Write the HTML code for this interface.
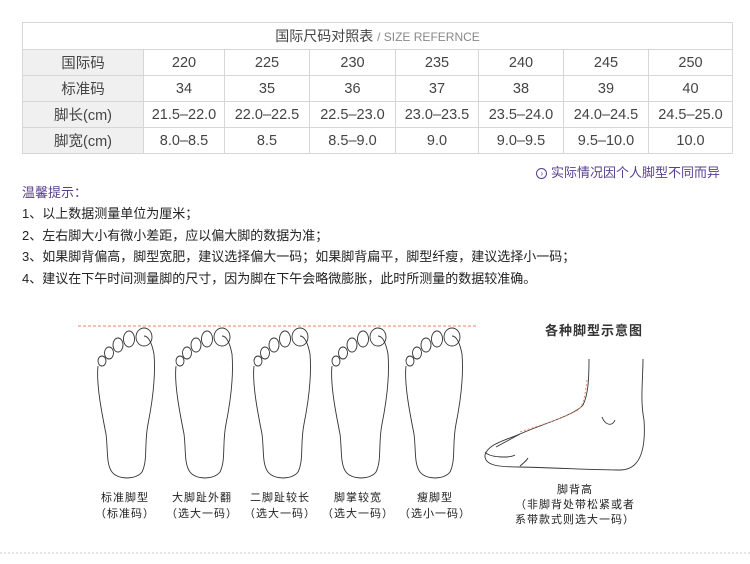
<!DOCTYPE html>
<html><head><meta charset="utf-8"><style>
body{margin:0;width:750px;height:564px;background:#fff;font-family:"Liberation Sans","Noto Sans CJK SC",sans-serif;color:#333;position:relative;overflow:hidden}
table{position:absolute;left:22px;top:22px;width:711px;border-collapse:collapse;font-size:14.5px;color:#444}
td{border:1px solid #d6d6d6;text-align:center;height:25px;padding:0}
td.h{background:#f0f0f0;width:120px}
.t{height:26px;font-size:14px}
.t span{font-size:12px;color:#888}
.note{position:absolute;right:30px;top:162px;color:#5a3f8f;font-size:13px}
.tip{position:absolute;left:22px;top:182px;color:#5a3f8f;font-size:13px}
.list{position:absolute;left:22px;top:203px;font-size:13px;line-height:21.5px;color:#222}
.lab{position:absolute;font-size:11px;text-align:center;line-height:16px;color:#222;letter-spacing:1px}
</style></head><body>
<table>
<tr><td colspan="8" class="t">国际尺码对照表 <span>/ SIZE REFERNCE</span></td></tr>
<tr><td class="h">国际码</td><td style="width:80px">220</td><td style="width:84px">225</td><td style="width:85px">230</td><td style="width:82px">235</td><td style="width:84px">240</td><td style="width:84px">245</td><td>250</td></tr>
<tr><td class="h">标准码</td><td>34</td><td>35</td><td>36</td><td>37</td><td>38</td><td>39</td><td>40</td></tr>
<tr><td class="h">脚长(cm)</td><td>21.5–22.0</td><td>22.0–22.5</td><td>22.5–23.0</td><td>23.0–23.5</td><td>23.5–24.0</td><td>24.0–24.5</td><td>24.5–25.0</td></tr>
<tr><td class="h">脚宽(cm)</td><td>8.0–8.5</td><td>8.5</td><td>8.5–9.0</td><td>9.0</td><td>9.0–9.5</td><td>9.5–10.0</td><td>10.0</td></tr>
</table>
<div class="note"><span style="display:inline-block;width:9px;height:9px;border:1px solid #5a3f8f;border-radius:50%;font-size:8px;line-height:9px;text-align:center;vertical-align:1px">›</span> 实际情况因个人脚型不同而异</div>
<div class="tip">温馨提示：</div>
<div class="list">1、以上数据测量单位为厘米；<br>2、左右脚大小有微小差距，应以偏大脚的数据为准；<br>3、如果脚背偏高，脚型宽肥，建议选择偏大一码；如果脚背扁平，脚型纤瘦，建议选择小一码；<br>4、建议在下午时间测量脚的尺寸，因为脚在下午会略微膨胀，此时所测量的数据较准确。</div>
<svg width="750" height="564" style="position:absolute;left:0;top:0" fill="none" stroke="#333" stroke-width="0.9">
<defs><g id="f">
<path d="M4,42 C2,60 8,90 12,110 C14,125 12,140 18,148 C24,156 42,156 48,148 C54,136 50,120 54,100 C58,80 62,55 60,30 C58,20 55,12 50,12"/>
<ellipse cx="50" cy="13" rx="8" ry="9"/><ellipse cx="35" cy="15" rx="5.5" ry="8"/><ellipse cx="24" cy="21" rx="5" ry="7"/><ellipse cx="15" cy="29" rx="4.5" ry="6"/><ellipse cx="8" cy="37" rx="4" ry="5"/>
</g></defs>
<use href="#f" x="94" y="324"/>
<use href="#f" x="172" y="324"/>
<use href="#f" x="250" y="324"/>
<use href="#f" x="328" y="324"/>
<use href="#f" x="402" y="324"/>
<line x1="78" y1="326" x2="476" y2="326" stroke="#f08060" stroke-dasharray="3,2"/>
<path d="M589,359 C589,380 588,395 583,405 C575,415 540,425 520,434 C500,442 488,445 485,455 C484,466 500,467 520,467 C560,468 600,470 620,470 C640,470 646,450 644,420 C640,400 643,380 643,359"/>
<path d="M520,434 L496,447 M485,452 C490,458 510,458 515,455 M520,466 C525,462 527,460 528,458 M602,417 C605,425 612,427 615,420"/>
<path d="M587,380 C585,395 584,405 578,410 C560,420 540,425 520,432" stroke="#f08060" stroke-dasharray="2,2"/>
<line x1="0" y1="553" x2="750" y2="553" stroke="#ccc" stroke-dasharray="2,2"/>
</svg>
<div class="lab" style="left:85px;top:490px;width:80px">标准脚型<br>（标准码）</div>
<div class="lab" style="left:162px;top:490px;width:80px">大脚趾外翻<br>（选大一码）</div>
<div class="lab" style="left:240px;top:490px;width:80px">二脚趾较长<br>（选大一码）</div>
<div class="lab" style="left:318px;top:490px;width:80px">脚掌较宽<br>（选大一码）</div>
<div class="lab" style="left:395px;top:490px;width:80px">瘦脚型<br>（选小一码）</div>
<div style="position:absolute;left:545px;top:320px;font-size:13px;font-weight:bold;letter-spacing:1px">各种脚型示意图</div>
<div class="lab" style="left:505px;top:483px;width:140px;line-height:15px">脚背高<br>（非脚背处带松紧或者<br>系带款式则选大一码）</div>
</body></html>
